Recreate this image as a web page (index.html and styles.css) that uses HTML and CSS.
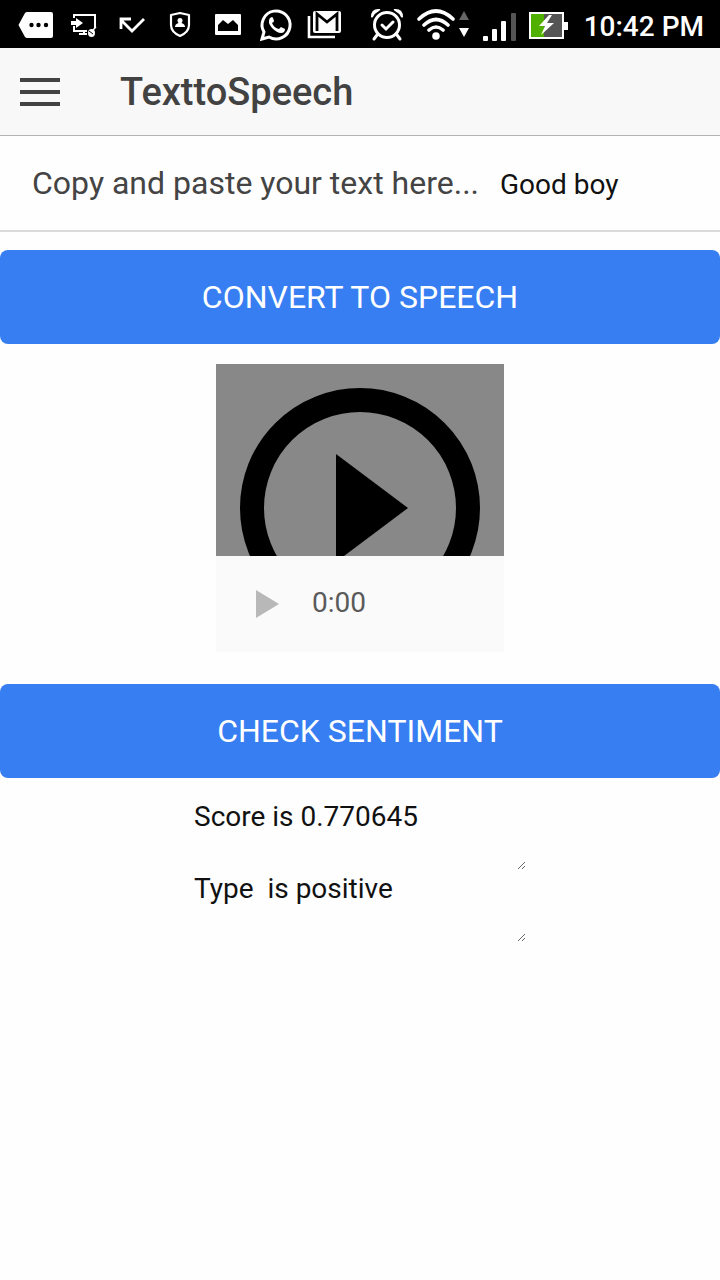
FILE: index.html
```html
<!DOCTYPE html>
<html lang="en">
<head>
<meta charset="utf-8">
<meta name="viewport" content="width=device-width, initial-scale=1">
<title>TexttoSpeech</title>
<link rel="stylesheet" href="styles.css">
</head>
<body>
<div class="status-bar">
  <div class="notifications">
    <svg class="notification" viewBox="0 0 48 48" aria-hidden="true"><path fill="#fff" d="M15 12h24q2 0 2 2v22q0 2-2 2H15q-1 0-2-1l-6-11q-1-1 0-2l6-11q1-1 2-1z"/><g fill="#000"><circle cx="19.500" cy="25" r="2.200"/><circle cx="26.500" cy="25" r="2.200"/><circle cx="34" cy="25" r="2.200"/></g></svg>
    <svg class="notification" viewBox="0 0 48 48" aria-hidden="true"><g fill="none" stroke="#fff" stroke-width="2"><path d="M14 18v-3h21v13M14 26v5h13M24 31v3M19 34h8"/></g><path fill="#fff" d="M11 21h5v-3l7 5-7 5v-3h-5z"/><ellipse cx="31.500" cy="33" rx="3.500" ry="4" fill="#fff"/><path d="M33 30l3-3" stroke="#fff" stroke-width="1.500"/><path d="M29 31l4 3" stroke="#000"/></svg>
    <svg class="notification" viewBox="0 0 48 48" aria-hidden="true"><path fill="none" stroke="#fff" stroke-width="2.800" d="M36 19L24 31 13 20M13 29V19h10"/></svg>
    <svg class="notification" viewBox="0 0 48 48" aria-hidden="true"><path fill="none" stroke="#fff" stroke-width="2.200" stroke-linejoin="round" d="M24 13l9 2v10q0 7-9 11-9-4-9-11V15z"/><circle cx="24" cy="20.500" r="2.500" fill="#fff"/><path fill="#fff" d="M22.500 21h3v2q3.500 1 3.500 4H19q0-3 3.500-4z"/></svg>
    <svg class="notification" viewBox="0 0 48 48" aria-hidden="true"><rect x="11" y="14" width="26" height="21" rx="1" fill="#fff"/><path d="M14 31v-6l5-5 5 4 5-4 5 5v6z"/></svg>
    <svg class="notification" viewBox="0 0 48 48" aria-hidden="true"><path fill="none" stroke="#fff" stroke-width="3" d="M10 39l2-7a14 14 0 1 1 5 5z"/><path fill="#fff" d="M18 18l2-1q1 0 2 4 0 1-2 2 2 5 7 6l2-2 4 2q0 4-4 4-4 0-9-5-5-6-2-10z"/></svg>
    <svg class="notification" viewBox="0 0 48 48" aria-hidden="true"><path fill="none" stroke="#fff" stroke-width="2.600" d="M9 16v21h26"/><rect x="13" y="11" width="28" height="22" rx="2" fill="#fff"/><path fill="none" stroke="#000" stroke-width="2.800" d="M17 31V14l10 8 10-8v17"/></svg>
  </div>
  <div class="system-status">
    <svg class="alarm" viewBox="0 0 36 34" aria-hidden="true"><g fill="none" stroke="#fff" stroke-width="3" stroke-linecap="round"><circle cx="18" cy="17" r="12.500"/><path d="M8 27l-3 4M28 27l3 4M13 17l4 4 7-7"/></g><path fill="#fff" d="M2 9q0-9 9-8 1 1-1 2-4 2-6 6-1 1-2 0zM34 9q0-9-9-8-1 1 1 2 4 2 6 6 1 1 2 0z"/></svg>
    <svg class="wifi" viewBox="0 0 52 34" aria-hidden="true"><g fill="none" stroke="#fff" stroke-width="3.600" stroke-linecap="round"><path d="M2 11q17-16 34 0M7 17q12-11 24 0M12 22q7-6 14 0"/></g><circle cx="19" cy="28" r="3.800" fill="#fff"/><path fill="#666" d="M42 12l5-9 5 9z"/><path fill="#fff" d="M42 20h10l-5 9z"/></svg>
    <svg class="signal" viewBox="0 0 34 34" aria-hidden="true"><g fill="#fff"><rect y="28" width="5" height="5" rx="1"/><rect x="9" y="21" width="5" height="12" rx="1"/><rect x="18" y="13" width="5" height="20" rx="1"/></g><rect x="28" y="5" width="5" height="28" rx="1" fill="#555"/></svg>
    <svg class="battery" viewBox="0 0 39 28" aria-hidden="true"><rect x="1" y="2" width="33" height="25" fill="#555"/><path fill="#50b000" d="M1 2h14v25H1z"/><path fill="#fff" d="M35 11h4v8h-4zM20 4l-10 11h6l-4 9 13-12h-7l5-8z"/><rect x="1" y="2" width="33" height="25" fill="none" stroke="#fff" stroke-width="2"/></svg>
    <time class="clock">10:42 PM</time>
  </div>
</div>
<header class="toolbar">
  <button class="menu-button" type="button" aria-label="Menu"><span class="menu-line"></span><span class="menu-line"></span><span class="menu-line"></span></button>
  <h1 class="title">TexttoSpeech</h1>
</header>
<main>
  <div class="text-row">
    <label class="text-label" for="source">Copy and paste your text here...</label>
    <input class="text-input" id="source" type="text" value="Good boy">
  </div>
  <button class="action" type="button">CONVERT TO SPEECH</button>
  <section class="player" aria-label="Speech player">
    <svg class="poster" viewBox="0 0 288 192" aria-hidden="true"><rect width="288" height="192" fill="#888"/><circle cx="144" cy="144" r="108" fill="none" stroke="#000" stroke-width="24"/><path d="M120 90l72 54-72 54z"/></svg>
    <div class="controls">
      <button class="play" type="button" aria-label="Play"><svg class="play-icon" viewBox="0 0 23 28" aria-hidden="true"><path fill="#b8b8b8" d="M0 0l23 14L0 28z"/></svg></button>
      <span class="elapsed">0:00</span>
    </div>
  </section>
  <button class="action" type="button">CHECK SENTIMENT</button>
  <div class="results">
    <textarea class="result" aria-label="Score">Score is 0.770645</textarea>
    <textarea class="result" aria-label="Type">Type  is positive</textarea>
  </div>
</main>
</body>
</html>
```
FILE: styles.css
```css
* { box-sizing: border-box; }

body {
  margin: 0;
  background: #fefefe;
  color: #111;
  font-family: Roboto, "Liberation Sans", sans-serif;
}

button, input, textarea {
  margin: 0;
  border: 0;
  padding: 0;
  border-radius: 0;
  background: transparent;
  color: inherit;
  font: inherit;
}

svg { display: block; }

.status-bar {
  display: flex;
  align-items: center;
  justify-content: space-between;
  height: 48px;
  padding: 0 16px 0 12px;
  background: #000;
  color: #fff;
}

.notifications, .system-status { display: flex; align-items: center; }
.notification { width: 48px; height: 48px; }
.system-status { gap: 12px; padding-top: 2px; }
.alarm { width: 36px; height: 34px; }
.wifi { width: 52px; height: 34px; margin-right: 2px; }
.signal { width: 34px; height: 34px; }
.battery { width: 39px; height: 28px; }
.clock { padding: 4px 0 0 4px; font-size: 28px; line-height: 32px; font-weight: 500; white-space: nowrap; }

.toolbar {
  display: flex;
  align-items: center;
  gap: 60px;
  height: 88px;
  padding: 0 20px;
  border-bottom: 1px solid #b2b2b2;
  background: #f8f8f8;
  color: #424242;
}

.menu-button { display: grid; gap: 8px; width: 40px; }
.menu-line { height: 4px; background: #424242; }
.title { margin: 0; font-size: 38px; line-height: 44px; font-weight: 500; }

.text-row {
  display: flex;
  align-items: center;
  gap: 21px;
  height: 96px;
  margin-bottom: 18px;
  padding: 0 32px;
  border-bottom: 2px solid #dadada;
}

.text-label { flex: none; color: #444; font-size: 32px; line-height: 40px; }
.text-input { flex: 1; min-width: 0; padding-top: 4px; font-size: 28px; line-height: 36px; }

.action {
  display: block;
  width: 100%;
  height: 94px;
  border-radius: 8px;
  background: #367ef2;
  color: #fff;
  font-size: 32px;
}

.player { width: 40%; margin: 20px auto 32px; }
.poster { width: 100%; height: auto; }

.controls {
  display: flex;
  align-items: center;
  gap: 33px;
  height: 96px;
  padding: 0 40px;
  background: #fafafa;
}

.play-icon { width: 23px; height: 28px; }
.elapsed { padding-bottom: 2px; color: #5a5a5a; font-size: 28px; line-height: 32px; }

.results {
  display: flex;
  flex-direction: column;
  align-items: center;
  padding-top: 20px;
}

.result {
  display: block;
  width: 332px;
  height: 72px;
  padding: 3px 0;
  font-size: 28px;
  line-height: 32px;
  resize: both;
}
```
